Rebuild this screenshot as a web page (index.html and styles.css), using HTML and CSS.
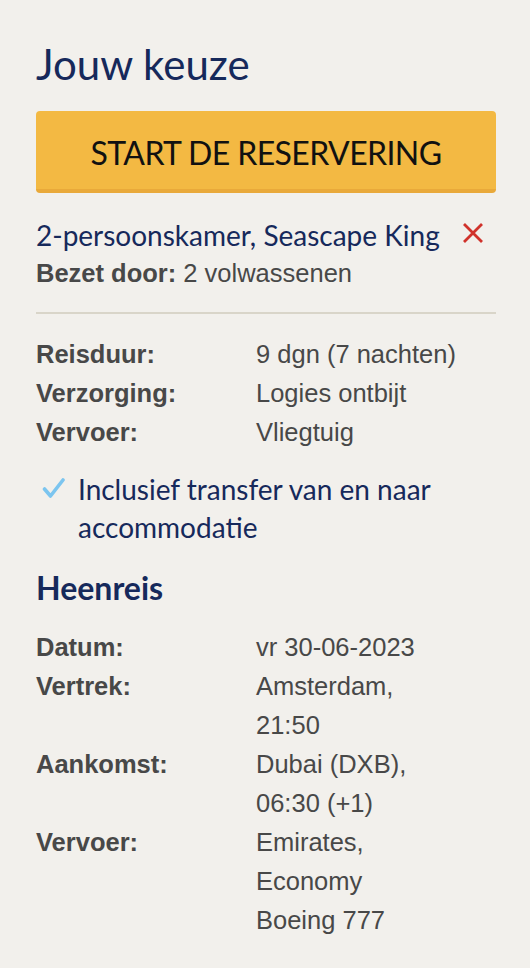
FILE: index.html
```html
<!DOCTYPE html>
<html lang="nl">
<head>
<meta charset="utf-8">
<title>Jouw keuze</title>
<link rel="stylesheet" href="styles.css">
</head>
<body>
<div class="panel">
  <h1 class="title">Jouw keuze</h1>
  <button class="cta">START DE RESERVERING</button>

  <div class="room">
    <span class="room-name">2-persoonskamer, Seascape King</span>
    <svg class="remove" width="22" height="22" viewBox="0 0 22 22" aria-label="verwijderen">
      <path d="M2 2 L20 20 M20 2 L2 20" stroke="#d0322b" stroke-width="2.8" fill="none"/>
    </svg>
  </div>
  <div class="occupancy"><b>Bezet door:</b> 2 volwassenen</div>

  <hr class="divider">

  <dl class="facts">
    <dt>Reisduur:</dt><dd>9 dgn (7 nachten)</dd>
    <dt>Verzorging:</dt><dd>Logies ontbijt</dd>
    <dt>Vervoer:</dt><dd>Vliegtuig</dd>
  </dl>

  <div class="included">
    <svg class="check" width="24" height="22" viewBox="0 0 24 22">
      <path d="M2.5 12 L8.5 19 L21 3" stroke="#7cc5ef" stroke-width="3.6" fill="none" stroke-linecap="round" stroke-linejoin="round"/>
    </svg>
    <span>Inclusief transfer van en naar accommodatie</span>
  </div>

  <h2 class="subtitle">Heenreis</h2>

  <dl class="facts">
    <dt>Datum:</dt><dd>vr 30-06-2023</dd>
    <dt>Vertrek:</dt><dd>Amsterdam,<br>21:50</dd>
    <dt>Aankomst:</dt><dd>Dubai (DXB),<br>06:30 (+1)</dd>
    <dt>Vervoer:</dt><dd>Emirates,<br>Economy<br>Boeing 777</dd>
  </dl>
</div>
</body>
</html>
```

FILE: styles.css
```css
html, body {
  margin: 0;
  padding: 0;
  background: #f2f0ec;
}

.panel {
  padding: 38px 34px 0 36px;
  font-family: "Liberation Sans", Arial, sans-serif;
  color: #484848;
}

.title {
  margin: 0;
  font-family: Lato, "Noto Sans", sans-serif;
  font-weight: 400;
  font-size: 42px;
  line-height: 52px;
  color: #16295b;
}

.cta {
  display: block;
  width: 100%;
  margin-top: 21px;
  height: 82px;
  border: 0;
  border-bottom: 4px solid #e9a93a;
  border-radius: 4px;
  background: #f3b943;
  font-family: Lato, "Noto Sans", sans-serif;
  font-size: 32px;
  letter-spacing: -0.6px;
  color: #111;
  padding: 4px 0 0 0;
  cursor: pointer;
}

.room {
  display: flex;
  align-items: center;
  gap: 22px;
  margin-top: 24px;
  font-family: Lato, "Noto Sans", sans-serif;
  font-size: 28px;
  line-height: 36px;
  color: #16295b;
}

.remove {
  flex: none;
  margin-top: -4px;
}

.occupancy {
  font-size: 25.5px;
  line-height: 40px;
}

.occupancy b {
  font-weight: 700;
}

.divider {
  margin: 19px 0 21px 0;
  border: 0;
  height: 2px;
  background: #d9d5c9;
}

.facts {
  display: grid;
  grid-template-columns: 220px 1fr;
  margin: 0;
  font-size: 25.5px;
  line-height: 39px;
}

.facts dt {
  font-weight: 700;
}

.facts dd {
  margin: 0;
}

.included {
  display: flex;
  align-items: flex-start;
  gap: 12px;
  margin-top: 18px;
  padding-left: 6px;
  font-family: Lato, "Noto Sans", sans-serif;
  font-size: 28px;
  line-height: 38px;
  color: #16295b;
}

.check {
  flex: none;
  margin-top: 7px;
}

.subtitle {
  margin: 22px 0 20px 0;
  font-family: Lato, "Noto Sans", sans-serif;
  font-weight: 700;
  font-size: 32px;
  line-height: 40px;
  color: #16295b;
}
```
